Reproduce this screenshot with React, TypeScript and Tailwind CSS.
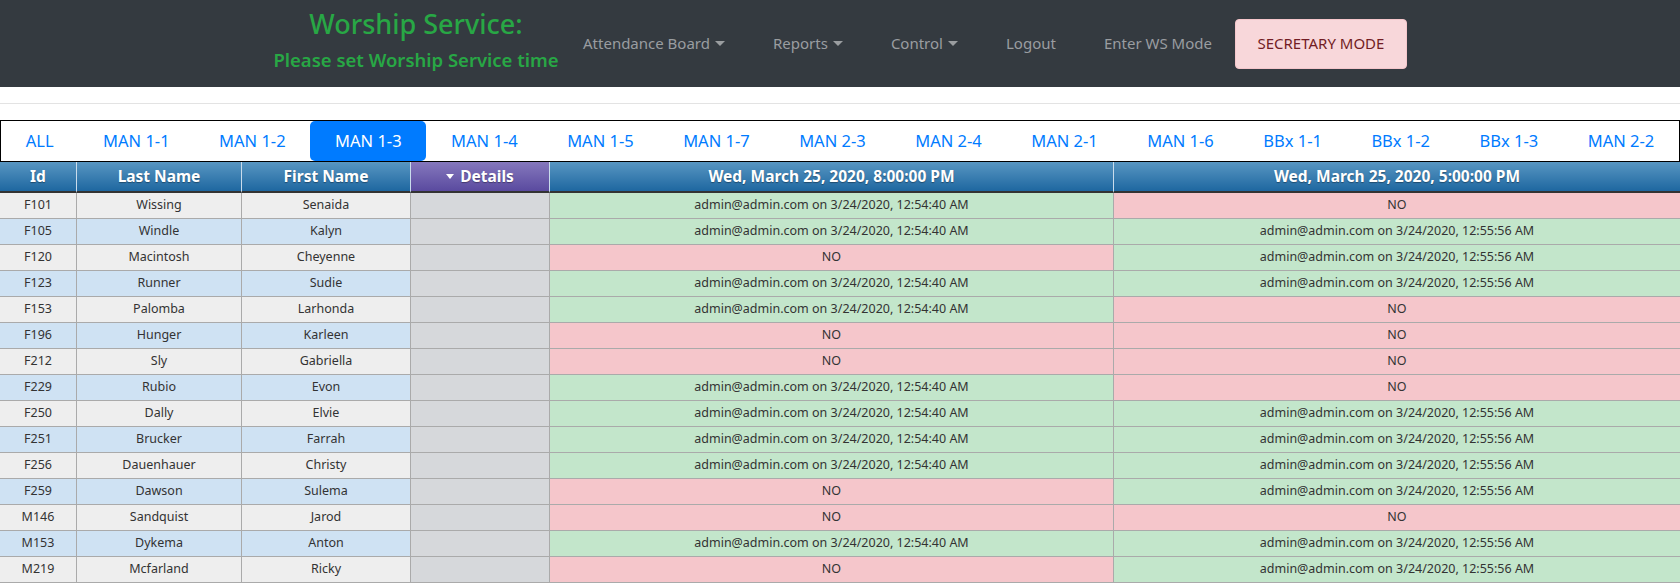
import React from "react";

const A1 = "admin@admin.com on 3/24/2020, 12:54:40 AM";
const A2 = "admin@admin.com on 3/24/2020, 12:55:56 AM";

const rows: [string, string, string, string | null, string | null][] = [
  ["F101", "Wissing", "Senaida", A1, null],
  ["F105", "Windle", "Kalyn", A1, A2],
  ["F120", "Macintosh", "Cheyenne", null, A2],
  ["F123", "Runner", "Sudie", A1, A2],
  ["F153", "Palomba", "Larhonda", A1, null],
  ["F196", "Hunger", "Karleen", null, null],
  ["F212", "Sly", "Gabriella", null, null],
  ["F229", "Rubio", "Evon", A1, null],
  ["F250", "Dally", "Elvie", A1, A2],
  ["F251", "Brucker", "Farrah", A1, A2],
  ["F256", "Dauenhauer", "Christy", A1, A2],
  ["F259", "Dawson", "Sulema", null, A2],
  ["M146", "Sandquist", "Jarod", null, null],
  ["M153", "Dykema", "Anton", A1, A2],
  ["M219", "Mcfarland", "Ricky", null, A2],
];

const tabs = [
  "ALL",
  "MAN 1-1",
  "MAN 1-2",
  "MAN 1-3",
  "MAN 1-4",
  "MAN 1-5",
  "MAN 1-7",
  "MAN 2-3",
  "MAN 2-4",
  "MAN 2-1",
  "MAN 1-6",
  "BBx 1-1",
  "BBx 1-2",
  "BBx 1-3",
  "MAN 2-2",
];

function Caret() {
  return (
    <span className="inline-block ml-[5px] align-[3px] w-0 h-0 border-x-[5px] border-x-transparent border-t-[5px] border-t-current" />
  );
}

const cols = "grid grid-cols-[77px_165px_169px_139px_564px_1fr]";

export default function App() {
  return (
    <div className="font-['Noto_Sans',sans-serif] bg-white min-h-[587px]">
      {/* Navbar */}
      <nav className="h-[87px] bg-[#343a40] flex items-center">
        <div className="ml-[273px] w-[286px] self-start pt-[7px] flex flex-col items-center text-[#28a745]">
          <div className="text-[27px] leading-[34px] font-medium whitespace-nowrap">Worship Service:</div>
          <div className="mt-[5px] text-[18.5px] leading-[28px] font-semibold whitespace-nowrap">
            Please set Worship Service time
          </div>
        </div>
        <div className="flex items-center text-[15px] text-[#9a9da0]">
          <span className="px-6 whitespace-nowrap">
            Attendance Board
            <Caret />
          </span>
          <span className="px-6 whitespace-nowrap">
            Reports
            <Caret />
          </span>
          <span className="px-6 whitespace-nowrap">
            Control
            <Caret />
          </span>
          <span className="px-6 whitespace-nowrap">Logout</span>
          <span className="px-6 whitespace-nowrap">Enter WS Mode</span>
          <button className="ml-[-1px] h-[50px] w-[172px] rounded-[4px] bg-[#f8d7da] border border-[#f5c6cb] text-[#721c24] text-[15px] whitespace-nowrap">
            SECRETARY MODE
          </button>
        </div>
      </nav>

      {/* Divider */}
      <div className="h-4" />
      <div className="border-t border-[#e3e3e3]" />
      <div className="h-4" />

      {/* Tabs */}
      <div className="border border-black flex h-[42px]">
        {tabs.map((t) => (
          <div
            key={t}
            className={
              t === "MAN 1-3"
                ? "flex-auto flex items-center justify-center px-4 text-[16.5px] text-white bg-[#007bff] rounded-[5px] whitespace-nowrap"
                : "flex-auto flex items-center justify-center px-4 text-[16.5px] text-[#007bff] whitespace-nowrap"
            }
          >
            {t}
          </div>
        ))}
      </div>

      {/* Table header */}
      <div className={`${cols} h-[31px] text-white font-bold text-[15.5px] [text-shadow:0_1px_1px_rgba(0,0,0,0.35)]`}>
        <div className="flex items-center justify-center border-r border-r-[#c9dcec] border-b-2 border-b-[#333] bg-[linear-gradient(#5896c2,#1e67a0)]">
          Id
        </div>
        <div className="flex items-center justify-center border-r border-r-[#c9dcec] border-b-2 border-b-[#333] bg-[linear-gradient(#5896c2,#1e67a0)]">
          Last Name
        </div>
        <div className="flex items-center justify-center border-r border-r-[#c9dcec] border-b-2 border-b-[#333] bg-[linear-gradient(#5896c2,#1e67a0)]">
          First Name
        </div>
        <div className="flex items-center justify-center border-r border-r-[#c9dcec] border-b-2 border-b-[#333] bg-[linear-gradient(#8578bd,#5a4a9f)]">
          <span className="inline-block mr-[6px] w-0 h-0 border-x-[4px] border-x-transparent border-t-[5px] border-t-white" />
          Details
        </div>
        <div className="flex items-center justify-center border-r border-r-[#c9dcec] border-b-2 border-b-[#333] bg-[linear-gradient(#5896c2,#1e67a0)]">
          Wed, March 25, 2020, 8:00:00 PM
        </div>
        <div className="flex items-center justify-center border-b-2 border-b-[#333] bg-[linear-gradient(#5896c2,#1e67a0)]">
          Wed, March 25, 2020, 5:00:00 PM
        </div>
      </div>

      {/* Rows */}
      {rows.map(([id, last, first, c1, c2], i) => {
        const base = i % 2 === 0 ? "bg-[#eeeeee]" : "bg-[#cfe2f3]";
        return (
          <div key={id} className={`${cols} h-[26px] text-[12.5px] text-[#333]`}>
            <div className={`${base} flex items-center justify-center border-r border-b border-[#aaaaaa]`}>{id}</div>
            <div className={`${base} flex items-center justify-center border-r border-b border-[#aaaaaa]`}>{last}</div>
            <div className={`${base} flex items-center justify-center border-r border-b border-[#aaaaaa]`}>{first}</div>
            <div className="bg-[#d6d8db] border-r border-b border-[#aaaaaa]" />
            <div
              className={`${c1 ? "bg-[#c3e6cb]" : "bg-[#f5c6cb]"} flex items-center justify-center border-r border-b border-[#aaaaaa]`}
            >
              {c1 ?? "NO"}
            </div>
            <div
              className={`${c2 ? "bg-[#c3e6cb]" : "bg-[#f5c6cb]"} flex items-center justify-center border-b border-[#aaaaaa]`}
            >
              {c2 ?? "NO"}
            </div>
          </div>
        );
      })}
    </div>
  );
}
